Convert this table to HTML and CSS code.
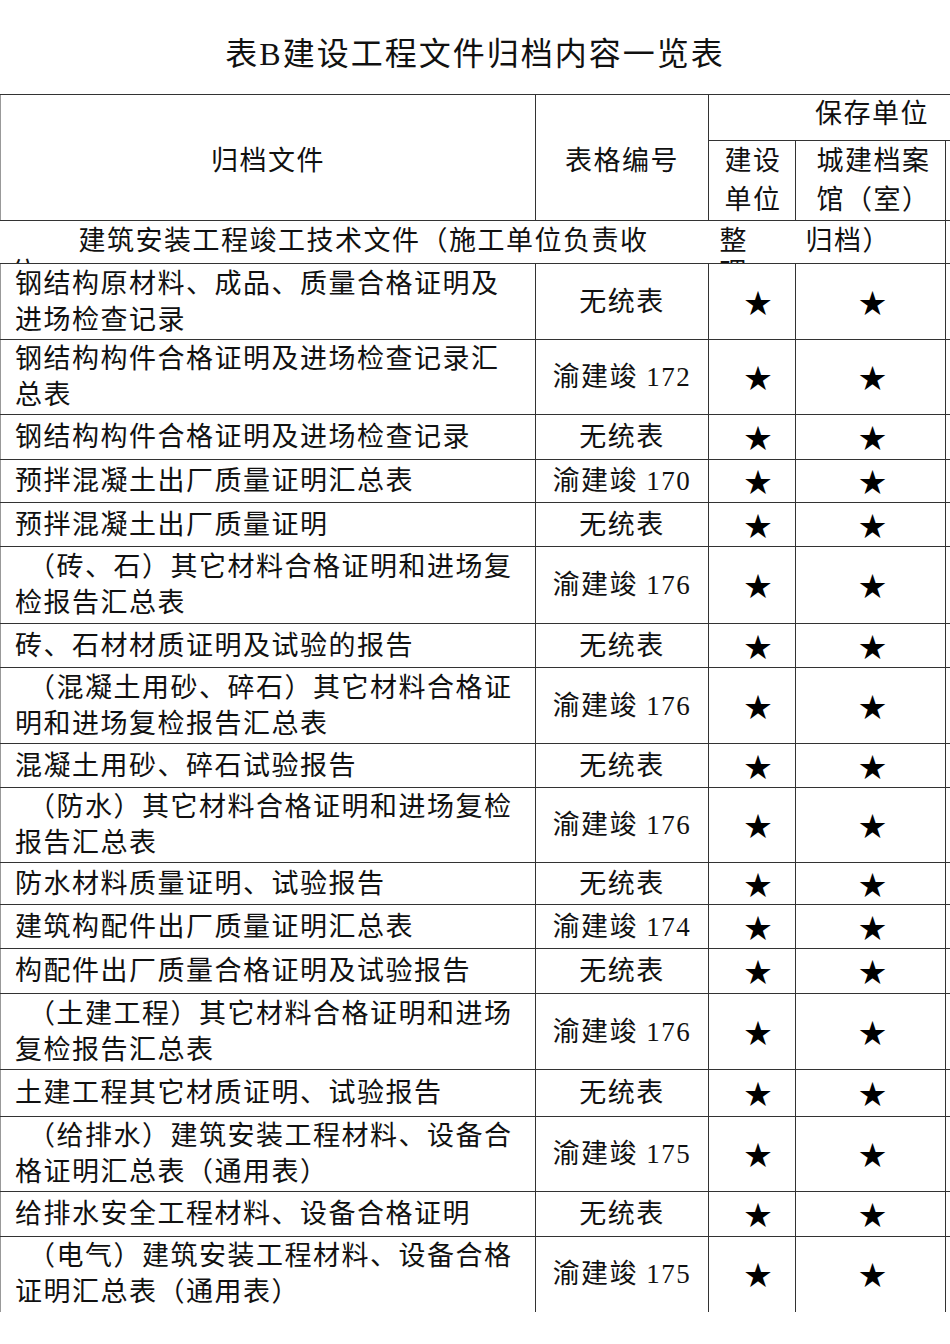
FILE: index.html
```html
<!DOCTYPE html>
<html lang="zh-CN">
<head>
<meta charset="utf-8">
<title>表B建设工程文件归档内容一览表</title>
<link rel="stylesheet" href="styles.css">
</head>
<body>
<div class="page">
  <h1 class="title">表B建设工程文件归档内容一览表</h1>
  <div class="sheet">
    <table class="archive">
      <colgroup>
        <col class="c-doc"><col class="c-code"><col class="c-unit"><col class="c-city"><col class="c-extra">
      </colgroup>
      <tr class="h-top">
        <th rowspan="2" class="doc-h">归档文件</th>
        <th rowspan="2" class="code-h">表格编号</th>
        <th colspan="3" class="keep">保存单位</th>
      </tr>
      <tr class="h-sub">
        <th class="unit-h">建设<br>单位</th>
        <th class="city-h">城建档案<br>馆（室）</th>
        <th class="extra"></th>
      </tr>
      <tr class="section">
        <td colspan="4" class="sec-cell">
          <div class="sec-clip">
            <div class="sec-grid">
              <span class="sec-a">建筑安装工程竣工技术文件（施工单位负责收</span>
              <span class="sec-b">整</span>
              <span class="sec-c">归档）</span>
              <span class="sec-a2">位</span>
              <span class="sec-b">理</span>
              <span class="sec-c"></span>
            </div>
          </div>
        </td>
        <td class="extra"></td>
      </tr>
      <tr class="r76"><td class="doc">钢结构原材料、成品、质量合格证明及<br>进场检查记录</td><td class="code">无统表</td><td class="star s1">★</td><td class="star s2">★</td><td class="extra"></td></tr>
      <tr class="r75"><td class="doc">钢结构构件合格证明及进场检查记录汇<br>总表</td><td class="code">渝建竣 172</td><td class="star s1">★</td><td class="star s2">★</td><td class="extra"></td></tr>
      <tr class="r45"><td class="doc">钢结构构件合格证明及进场检查记录</td><td class="code">无统表</td><td class="star s1">★</td><td class="star s2">★</td><td class="extra"></td></tr>
      <tr class="r43"><td class="doc">预拌混凝土出厂质量证明汇总表</td><td class="code">渝建竣 170</td><td class="star s1">★</td><td class="star s2">★</td><td class="extra"></td></tr>
      <tr class="r44"><td class="doc">预拌混凝土出厂质量证明</td><td class="code">无统表</td><td class="star s1">★</td><td class="star s2">★</td><td class="extra"></td></tr>
      <tr class="r77"><td class="doc ind">（砖、石）其它材料合格证明和进场复<br>检报告汇总表</td><td class="code">渝建竣 176</td><td class="star s1">★</td><td class="star s2">★</td><td class="extra"></td></tr>
      <tr class="r44"><td class="doc">砖、石材材质证明及试验的报告</td><td class="code">无统表</td><td class="star s1">★</td><td class="star s2">★</td><td class="extra"></td></tr>
      <tr class="r76"><td class="doc ind">（混凝土用砂、碎石）其它材料合格证<br>明和进场复检报告汇总表</td><td class="code">渝建竣 176</td><td class="star s1">★</td><td class="star s2">★</td><td class="extra"></td></tr>
      <tr class="r44"><td class="doc">混凝土用砂、碎石试验报告</td><td class="code">无统表</td><td class="star s1">★</td><td class="star s2">★</td><td class="extra"></td></tr>
      <tr class="r75"><td class="doc ind">（防水）其它材料合格证明和进场复检<br>报告汇总表</td><td class="code">渝建竣 176</td><td class="star s1">★</td><td class="star s2">★</td><td class="extra"></td></tr>
      <tr class="r42"><td class="doc">防水材料质量证明、试验报告</td><td class="code">无统表</td><td class="star s1">★</td><td class="star s2">★</td><td class="extra"></td></tr>
      <tr class="r44"><td class="doc">建筑构配件出厂质量证明汇总表</td><td class="code">渝建竣 174</td><td class="star s1">★</td><td class="star s2">★</td><td class="extra"></td></tr>
      <tr class="r45"><td class="doc">构配件出厂质量合格证明及试验报告</td><td class="code">无统表</td><td class="star s1">★</td><td class="star s2">★</td><td class="extra"></td></tr>
      <tr class="r76"><td class="doc ind">（土建工程）其它材料合格证明和进场<br>复检报告汇总表</td><td class="code">渝建竣 176</td><td class="star s1">★</td><td class="star s2">★</td><td class="extra"></td></tr>
      <tr class="r47"><td class="doc">土建工程其它材质证明、试验报告</td><td class="code">无统表</td><td class="star s1">★</td><td class="star s2">★</td><td class="extra"></td></tr>
      <tr class="r75"><td class="doc ind">（给排水）建筑安装工程材料、设备合<br>格证明汇总表（通用表）</td><td class="code">渝建竣 175</td><td class="star s1">★</td><td class="star s2">★</td><td class="extra"></td></tr>
      <tr class="r45"><td class="doc">给排水安全工程材料、设备合格证明</td><td class="code">无统表</td><td class="star s1">★</td><td class="star s2">★</td><td class="extra"></td></tr>
      <tr class="r75 last"><td class="doc ind">（电气）建筑安装工程材料、设备合格<br>证明汇总表（通用表）</td><td class="code">渝建竣 175</td><td class="star s1">★</td><td class="star s2">★</td><td class="extra"></td></tr>
    </table>
  </div>
</div>
</body>
</html>
```

FILE: styles.css
```css
html, body {
  margin: 0;
  padding: 0;
  background: #ffffff;
  overflow: hidden;
}

body {
  width: 950px;
  font-family: "Liberation Serif", "Noto Sans CJK SC", serif;
  color: #111111;
}

.page {
  width: 950px;
}

.title {
  margin: 0;
  padding-top: 35px;
  height: 38px;
  line-height: 38px;
  font-size: 32px;
  font-weight: normal;
  text-align: center;
  letter-spacing: 2px;
  color: #111111;
}

.sheet {
  margin-top: 21px;
  width: 950px;
  overflow: hidden;
}

.archive {
  border-collapse: collapse;
  table-layout: fixed;
  width: 975px;
}

.c-doc { width: 535px; }
.c-code { width: 173px; }
.c-unit { width: 87px; }
.c-city { width: 150px; }
.c-extra { width: 30px; }

.archive th,
.archive td {
  border: 1px solid #333333;
  padding: 0;
  font-weight: normal;
  font-size: 27px;
  letter-spacing: 1.5px;
  line-height: 36px;
  white-space: nowrap;
  vertical-align: middle;
  color: #111111;
}

.h-top { height: 46px; }
.h-sub { height: 80px; }
.section { height: 43px; }

.r42 { height: 42px; }
.r43 { height: 43px; }
.r44 { height: 44px; }
.r45 { height: 45px; }
.r47 { height: 47px; }
.r75 { height: 75px; }
.r76 { height: 76px; }
.r77 { height: 77px; }

.archive .doc-h {
  text-align: center;
  border-left-color: #999999;
  padding-top: 6px;
}

.archive .code-h {
  text-align: center;
  padding-top: 6px;
}

.archive .keep {
  text-align: left;
  padding-left: 106px;
  border-left: 1px solid #999999;
  line-height: 30px;
  vertical-align: top;
  padding-top: 4px;
}

.archive .unit-h {
  text-align: center;
  line-height: 39px;
  border-left: 1px solid #999999;
  padding-left: 2px;
}

.archive .city-h {
  text-align: center;
  line-height: 39px;
  padding-left: 6px;
}

.archive .extra {
  border-right: none;
}

.archive .sec-cell {
  border-left: none;
  vertical-align: top;
}

.sec-clip {
  height: 42px;
  overflow: hidden;
}

.sec-grid {
  display: grid;
  grid-template-columns: 708px 87px 150px;
  line-height: 32px;
  padding-top: 4px;
}

.sec-a {
  padding-left: 78px;
}

.sec-a2 {
  padding-left: 10px;
}

.sec-b {
  padding-left: 11px;
}

.sec-c {
  padding-left: 10px;
}

.archive .doc {
  text-align: left;
  padding-left: 14px;
  border-left-color: #999999;
}

.archive .doc.ind {
  text-indent: 13px;
}

.archive .code {
  text-align: center;
}

.archive .star {
  font-family: "Noto Sans CJK SC", sans-serif;
  text-align: center;
  letter-spacing: 0;
  color: #000000;
}

.archive .s1 {
  padding-left: 12px;
  border-left: 1px solid #999999;
}

.archive .s2 {
  padding-left: 4px;
}

.archive .last td {
  border-bottom: none;
}
```
